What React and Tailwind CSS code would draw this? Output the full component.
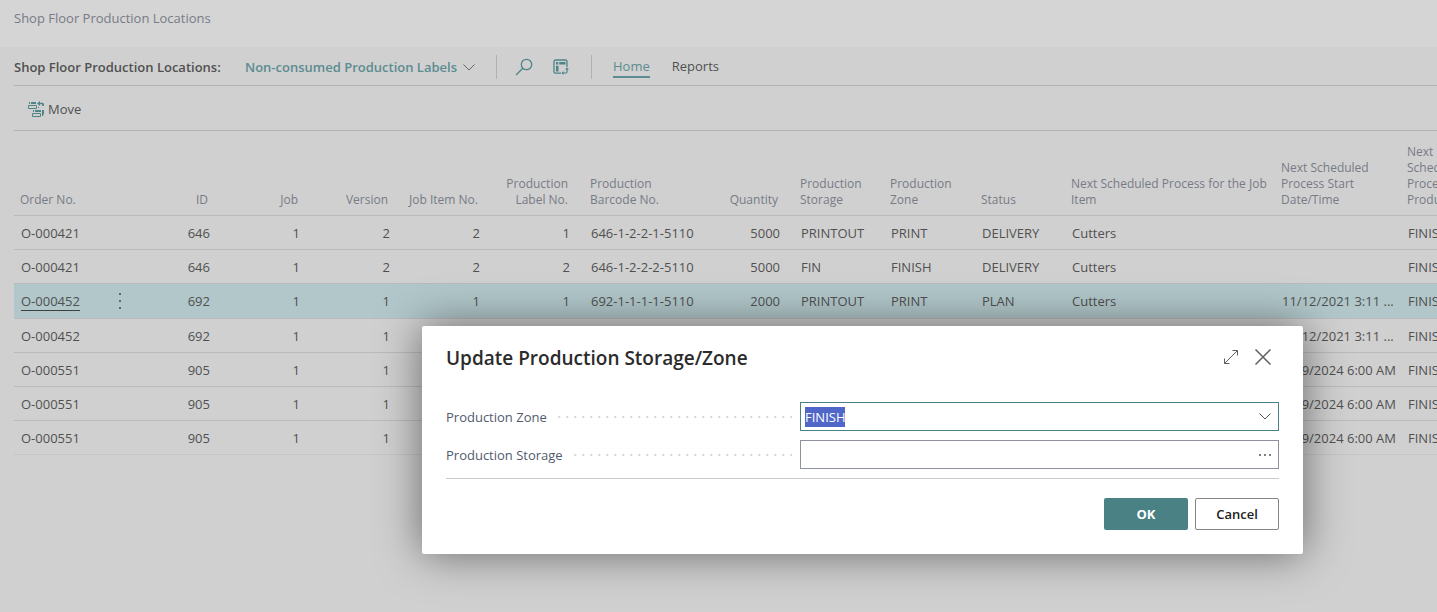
import { useEffect, useRef } from "react";

const columns = [
  { label: "Order No.", width: "w-[91px]" },
  { label: "", width: "w-[29px]" },
  { label: "ID", width: "w-[84px]", right: true },
  { label: "Job", width: "w-[90px]", right: true },
  { label: "Version", width: "w-[90px]", right: true },
  { label: "Job Item No.", width: "w-[90px]", right: true },
  { label: "Production Label No.", width: "w-[90px]", right: true },
  { label: "Production Barcode No.", width: "w-[120px]" },
  { label: "Quantity", width: "w-[90px]", right: true },
  { label: "Production Storage", width: "w-[90px]" },
  { label: "Production Zone", width: "w-[91px]" },
  { label: "Status", width: "w-[90px]" },
  { label: "Next Scheduled Process for the Job Item", width: "w-[210px]" },
  { label: "Next Scheduled Process Start Date/Time", width: "w-[126px]" },
  { label: "Next Scheduled Process Production", width: "w-[90px]" },
];

const rows = [
  ["O-000421", "", "646", "1", "2", "2", "1", "646-1-2-2-1-5110", "5000", "PRINTOUT", "PRINT", "DELIVERY", "Cutters", "", "FINISH"],
  ["O-000421", "", "646", "1", "2", "2", "2", "646-1-2-2-2-5110", "5000", "FIN", "FINISH", "DELIVERY", "Cutters", "", "FINISH"],
  ["O-000452", "", "692", "1", "1", "1", "1", "692-1-1-1-1-5110", "2000", "PRINTOUT", "PRINT", "PLAN", "Cutters", "11/12/2021 3:11 ...", "FINISH"],
  ["O-000452", "", "692", "1", "1", "", "", "", "", "", "", "", "", "11/12/2021 3:11 ...", "FINISH"],
  ["O-000551", "", "905", "1", "1", "", "", "", "", "", "", "", "", "12/9/2024 6:00 AM", "FINISH"],
  ["O-000551", "", "905", "1", "1", "", "", "", "", "", "", "", "", "12/9/2024 6:00 AM", "FINISH"],
  ["O-000551", "", "905", "1", "1", "", "", "", "", "", "", "", "", "12/9/2024 6:00 AM", "FINISH"],
];
const SELECTED = 2;

function Chevron({ className }) {
  return (
    <svg viewBox="0 0 12 7" width="12" height="7" fill="none" stroke="currentColor" className={className} aria-hidden="true">
      <path d="M.5.5 6 6 11.5.5" />
    </svg>
  );
}

function SearchIcon() {
  return (
    <svg viewBox="0 0 18 18" width="18" height="18" fill="none" stroke="currentColor" strokeWidth="1.3" aria-hidden="true">
      <circle cx="11.5" cy="6.5" r="5.2" />
      <path d="M7.8 10.2 1 17" />
    </svg>
  );
}

function AnalyzeIcon() {
  return (
    <svg viewBox="0 0 16 16" width="16" height="16" fill="none" aria-hidden="true">
      <path d="M8 14.200H2.500A1.500 1.500 0 0 1 1 12.700V2.500A1.500 1.500 0 0 1 2.500 1H12.500A1.500 1.500 0 0 1 14 2.500V8" stroke="currentColor" strokeWidth="1.300" />
      <path d="M3 3h2.200v2.500H3zM6.200 3H12.500v2.500H6.200zM3 6.800h2.500v5.700H3z" fill="currentColor" />
      <path d="M14 9.500V12.500a1.500 1.500 0 0 1-1.500 1.500H9" stroke="currentColor" strokeWidth="1.200" />
      <path d="M12 10.500 14 8.500l2 2zM10.500 12v4l-2-2z" fill="currentColor" />
    </svg>
  );
}

function MoveIcon() {
  return (
    <svg viewBox="0 0 16 16" width="16" height="16" fill="none" aria-hidden="true">
      <path d="M1 1h1v2H1zM3 1h5v2H3zM10 6h1v1h-1zM5 9h1v2H5zM7 9h6v2H7z" fill="currentColor" />
      <path d="M.5 4.500h8v3h-8zM4.500 12.500h8v3h-8z" stroke="currentColor" />
      <path d="M12 0 9 2.500 12 5V3.300h2.200V5H16V3.300C16 2.300 15.300 1.700 14.300 1.700H12zM14 9h2v3.500L15 15h-1v-2z" fill="currentColor" />
    </svg>
  );
}

function ExpandIcon() {
  return (
    <svg viewBox="0 0 16 16" width="16" height="16" fill="none" stroke="currentColor" aria-hidden="true">
      <path d="M1.500 14.500l13-13M9.500 1.500h5v5M1.500 9.500v5h5" />
    </svg>
  );
}

function CloseIcon() {
  return (
    <svg viewBox="0 0 16 16" width="16" height="16" fill="none" stroke="currentColor" strokeWidth="1.500" aria-hidden="true">
      <path d="M.5.5l15 15M15.500.5l-15 15" />
    </svg>
  );
}

function Field({ id, label, children }) {
  return (
    <div className="flex items-center">
      <label htmlFor={id} className="flex w-[354px] shrink-0 items-center gap-2 pr-2 text-[#505c6d]">
        {label}
        <span className="h-[2px] flex-1 bg-[linear-gradient(to_left,#d4d6d8_2px,transparent_2px)] bg-[length:8px_2px] bg-right bg-repeat-x" />
      </label>
      {children}
    </div>
  );
}

function Cell({ value, index, selected }) {
  if (index === 0) {
    return (
      <a href="#order" className={selected ? "border-b border-[#404040]" : ""}>
        {value}
      </a>
    );
  }
  if (index === 1 && selected) {
    return (
      <button type="button" aria-label="Show more options" className="flex h-4 w-full flex-col items-center justify-between">
        <span className="size-[2px] bg-[#666]" />
        <span className="size-[2px] bg-[#666]" />
        <span className="size-[2px] bg-[#666]" />
      </button>
    );
  }
  return value;
}

export default function App() {
  const zone = useRef(null);
  useEffect(() => {
    zone.current.focus();
    zone.current.select();
  }, []);

  return (
    <div className="min-h-screen overflow-hidden bg-[#d0d0d0] font-['Open_Sans','Noto_Sans',sans-serif] text-[13px] leading-5 text-[#505050]">
      <header className="flex h-[47px] bg-[#d5d5d5] px-3.5 pt-2 text-[#777b85]">
        <span>Shop Floor Production Locations</span>
      </header>

      <div className="pl-3.5">
        <div className="flex h-[39px] items-center border-b border-[#b1b1b3] pt-0.5">
          <h1 className="w-[231px] font-semibold whitespace-nowrap">Shop Floor Production Locations:</h1>
          <button type="button" className="flex w-[251px] items-center gap-1.5 font-semibold whitespace-nowrap text-[#5b8c90]">
            Non-consumed Production Labels
            <Chevron className="text-[#666]" />
          </button>
          <div className="flex h-6 items-center gap-5 border-x border-[#b1b1b5] pr-[22px] pl-[18px] text-[#4f8488]">
            <button type="button" aria-label="Search"><SearchIcon /></button>
            <button type="button" aria-label="Analyze"><AnalyzeIcon /></button>
          </div>
          <nav className="ml-[21px] flex gap-[22px]">
            <a href="#home" className="border-b-2 border-[#5b8c90] text-[#5b8c90]">Home</a>
            <a href="#reports">Reports</a>
          </nav>
        </div>

        <div className="flex h-[45px] items-center border-b border-[#b1b1b3] px-3.5 pt-0.5">
          <button type="button" className="flex items-center gap-1">
            <span className="text-[#4f8488]"><MoveIcon /></span>
            Move
          </button>
        </div>

        <table className="w-[1471px] table-fixed border-separate border-spacing-0">
          <thead>
            <tr className="h-[85px] text-xs leading-4 text-[#777b85]">
              {columns.map((c, i) => (
                <th
                  key={i}
                  scope="col"
                  className={`border-b border-[#bababa] pb-[7px] align-bottom font-normal ${c.width} ${
                    c.right ? "pr-2.5 text-right" : i === 0 ? "pl-1.5 text-left" : "pl-3 text-left"
                  }`}
                >
                  {c.label}
                </th>
              ))}
            </tr>
          </thead>
          <tbody>
            {rows.map((row, r) => (
              <tr key={r} className={r === SELECTED ? "h-[35px] bg-[#b1c7ca]" : "h-[34px]"}>
                {row.map((value, i) => (
                  <td
                    key={i}
                    className={`border-b p-0 whitespace-nowrap ${r === rows.length - 1 ? "border-[#c5c5c5]" : "border-[#bababa]"} ${
                      columns[i].right ? "pr-2 text-right" : i === 0 ? "pl-[7px]" : i === 1 ? "" : "pl-[13px]"
                    }`}
                  >
                    <Cell value={value} index={i} selected={r === SELECTED} />
                  </td>
                ))}
              </tr>
            ))}
          </tbody>
        </table>
      </div>

      <div
        role="dialog"
        aria-labelledby="dialog-title"
        className="absolute top-[326px] right-[134px] left-[422px] rounded-xs bg-white px-6 pt-4 pb-6 shadow-[0_0_44px_rgba(0,0,0,0.5)]"
      >
        <div className="flex h-8 items-center justify-between">
          <h2 id="dialog-title" className="text-[19px] leading-8 font-semibold text-[#2b2b2b]">Update Production Storage/Zone</h2>
          <div className="flex items-center gap-4 pr-2 pb-0.5 text-[#5f5f5f]">
            <button type="button" aria-label="Expand"><ExpandIcon /></button>
            <button type="button" aria-label="Close"><CloseIcon /></button>
          </div>
        </div>

        <div className="mt-7 flex flex-col gap-[9px] border-b border-[#cacaca] pb-[9px]">
          <Field id="zone" label="Production Zone">
            <div className="flex h-[29px] flex-1 items-center border border-[#4a8185] pr-[7px] pl-1">
              <input
                id="zone"
                ref={zone}
                defaultValue="FINISH"
                className="min-w-0 flex-1 text-[#212121] outline-none selection:bg-[#5067c9] selection:text-white"
              />
              <button type="button" aria-label="Choose a value"><Chevron className="text-[#505050]" /></button>
            </div>
          </Field>
          <Field id="storage" label="Production Storage">
            <div className="flex h-[29px] flex-1 items-center border border-[#8e929e] pr-[7px] pl-1">
              <input id="storage" className="min-w-0 flex-1 text-[#212121] outline-none" />
              <button type="button" aria-label="Look up a value" className="flex w-3 justify-between">
                <span className="size-[2px] rounded-full bg-[#505050]" />
                <span className="size-[2px] rounded-full bg-[#505050]" />
                <span className="size-[2px] rounded-full bg-[#505050]" />
              </button>
            </div>
          </Field>
        </div>

        <div className="mt-[19px] flex justify-end gap-[7px] font-semibold">
          <button type="button" className="h-8 w-[84px] rounded-xs bg-[#4a8185] font-bold text-white">OK</button>
          <button type="button" className="h-8 w-[84px] rounded-xs border border-[#858585] text-[#212121]">Cancel</button>
        </div>
      </div>
    </div>
  );
}
